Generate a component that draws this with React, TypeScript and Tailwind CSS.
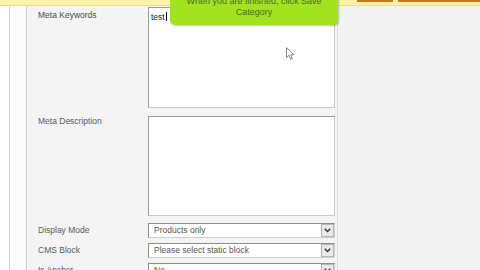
import React from "react";

function SelectBox({ value }: { value: string }) {
  return (
    <div className="flex h-[15px] w-[187px] border border-t-[#8d8d8d] border-l-[#8d8d8d] border-r-[#cfcfcf] border-b-[#cfcfcf] bg-white">
      <div className="flex-1 pl-[5px] text-[8.5px] leading-[13px] text-[#555]">{value}</div>
      <div className="flex h-[13px] w-[13px] items-center justify-center border border-[#b5b5b5] bg-[#e9e9e9]">
        <svg width="7" height="5" viewBox="0 0 7 5">
          <path d="M0.8 0.8 L3.5 3.6 L6.2 0.8" fill="none" stroke="#333" strokeWidth="1.4" />
        </svg>
      </div>
    </div>
  );
}

export default function App() {
  return (
    <div
      className="relative h-[270px] w-[480px] overflow-hidden bg-white"
      style={{ fontFamily: '"Liberation Sans", Arial, sans-serif' }}
    >
      {/* top notice bar */}
      <div className="flex h-[6px] border-b border-[#e6dc9a] bg-[#fcf3a9]">
        <div className="flex-1" />
        <div className="mr-[5px] h-[2px] w-[36px] bg-[#c9781f]" />
        <div className="h-[2px] w-[82px] bg-[#c9781f]" />
      </div>

      <div className="flex h-[264px]">
        <div className="w-[9px] bg-white" />
        <div className="w-[18px] border-l border-r border-[#cfcfcf] bg-[#fbfbfb]" />
        {/* form panel */}
        <div className="w-[310px] bg-[#f4f4f4] pl-[11px] pt-[1px] text-[8.5px] text-[#5a5a5a]">
          <div className="flex">
            <div className="w-[110px] pt-[2px] text-[#4a4a4a]">Meta Keywords</div>
            <div className="h-[101px] w-[187px] border border-t-[#9a9a9a] border-l-[#9a9a9a] border-r-[#c8c8c8] border-b-[#c8c8c8] bg-white px-[2px] pt-[3px] text-[#222]">
              test<span className="ml-[1px] inline-block h-[9px] w-[1px] translate-y-[1px] bg-black" />
            </div>
          </div>
          <div className="mt-[8px] flex">
            <div className="w-[110px] -mt-[1px]">Meta Description</div>
            <div className="h-[100px] w-[187px] border border-t-[#9a9a9a] border-l-[#9a9a9a] border-r-[#c8c8c8] border-b-[#c8c8c8] bg-white" />
          </div>
          <div className="mt-[7px] flex flex-col gap-[5px]">
            <div className="flex items-center">
              <div className="w-[110px]">Display Mode</div>
              <SelectBox value="Products only" />
            </div>
            <div className="flex items-center">
              <div className="w-[110px]">CMS Block</div>
              <SelectBox value="Please select static block" />
            </div>
            <div className="flex items-center">
              <div className="w-[110px]">Is Anchor</div>
              <SelectBox value="No" />
            </div>
          </div>
        </div>
        <div className="flex-1 border-l border-[#dedede] bg-[#f3f3f3]" />
      </div>

      {/* green tip */}
      <div className="absolute left-[170px] top-[-6px] h-[31px] w-[168px] rounded-b-[5px] bg-[#a3e21f] text-center text-[9px] leading-[11px] text-[#4a6a2c] shadow-[1px_1px_2px_rgba(0,0,0,0.25)]">
        <div className="pt-[2px]">When you are finished, click Save</div>
        <div>Category</div>
      </div>

      {/* mouse cursor */}
      <svg className="absolute left-[286px] top-[47px]" width="9" height="14" viewBox="0 0 9 14">
        <path d="M0.5 0.5 L0.5 10.5 L3 8.3 L4.8 12.5 L6.3 11.8 L4.6 7.8 L8 7.8 Z" fill="#ffffff" stroke="#888" strokeWidth="1" />
      </svg>
    </div>
  );
}
